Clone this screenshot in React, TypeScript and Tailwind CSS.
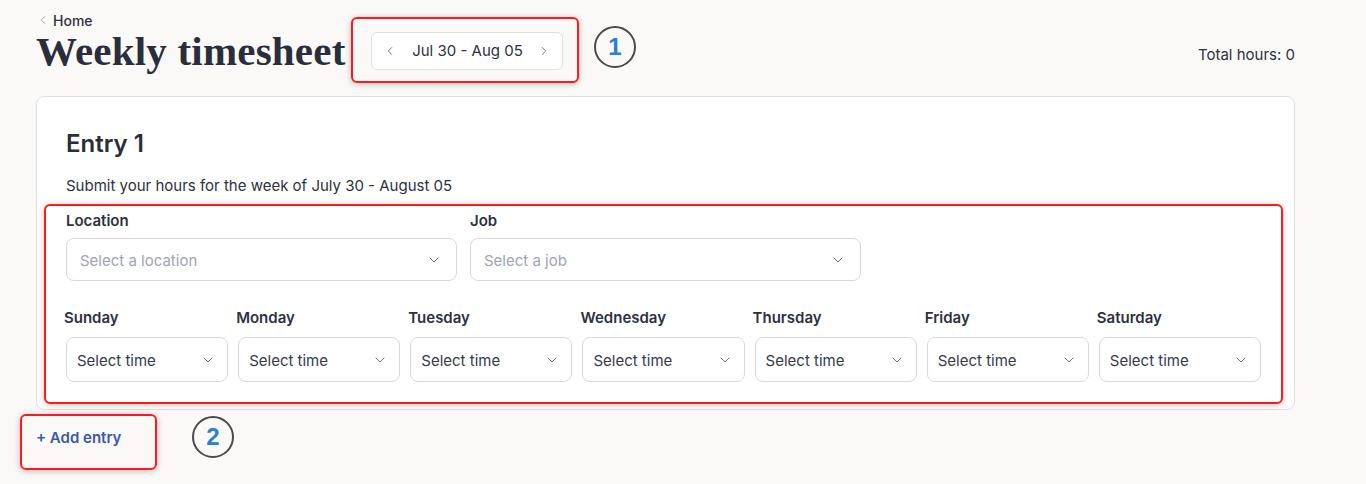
import { ChevronDown, ChevronLeft, ChevronRight } from 'lucide-react'

const days = ['Sunday', 'Monday', 'Tuesday', 'Wednesday', 'Thursday', 'Friday', 'Saturday']

const SelectBox = ({ placeholder, muted, className }: { placeholder: string; muted?: boolean; className?: string }) => (
  <div
    className={`flex items-center justify-between rounded-lg border border-[#dcd8d8] bg-white ${className ?? ''}`}
  >
    <span className={`pt-[3px] text-[15px] ${muted ? 'text-[#a1a4b5]' : 'text-[#353a4c]'}`}>{placeholder}</span>
    <ChevronDown className="h-4 w-4 text-[#6e7284]" strokeWidth={1.5} />
  </div>
)

const Marker = ({ n, className }: { n: number; className: string }) => (
  <div
    className={`absolute flex h-[42px] w-[42px] items-center justify-center rounded-full border-2 border-[#4a4a4a] text-[24px] font-bold text-[#2a80d2] ${className}`}
    style={{ fontFamily: '"Liberation Sans", Arial, sans-serif' }}
  >
    {n}
  </div>
)

export default function App() {
  return (
    <div className="relative min-h-[484px] w-full bg-[#faf9f8] text-[#2d3142]" style={{ fontFamily: 'Inter, "Noto Sans", sans-serif' }}>
      <div className="ml-[36px] w-[1259px]">
        <div className="flex justify-between">
          <div className="pt-[10px]">
            <div className="flex h-[20px] items-center gap-[3px] text-[14px] font-medium text-[#2d3142]">
              <ChevronLeft className="h-[14px] w-[14px] text-[#9a9cab]" strokeWidth={1.5} />
              <span>Home</span>
            </div>
            <div className="mt-[2px] flex h-[38px] items-center">
              <h1
                className="text-[41px] font-bold leading-[38px] tracking-[0.2px] text-[#2a2e3c]"
                style={{ fontFamily: '"Liberation Serif", "Times New Roman", serif' }}
              >
                Weekly timesheet
              </h1>
              <div className="ml-[26px] flex h-[38px] w-[192px] items-center justify-between rounded-md border border-[#e2dfdf] bg-white px-[11px]">
                <ChevronLeft className="h-[14px] w-[14px] text-[#5a6a8a]" strokeWidth={1.5} />
                <span className="text-[15px] text-[#2d3142]">Jul 30 - Aug 05</span>
                <ChevronRight className="h-[14px] w-[14px] text-[#5a6a8a]" strokeWidth={1.5} />
              </div>
            </div>
          </div>
          <div className="pt-[45px] text-[15px] leading-[20px] text-[#2d3142]">Total hours: 0</div>
        </div>

        <div className="mt-[26px] rounded-lg border border-[#e3dfdf] bg-white px-[29px] pb-[27px] pt-[31px]">
          <h2 className="text-[24px] font-semibold leading-[32px] text-[#2a2e3b]">Entry 1</h2>
          <p className="mt-[16px] text-[15px] leading-[20px]">Submit your hours for the week of July 30 - August 05</p>

          <div className="mt-[15px] grid grid-cols-3 gap-x-[13px]">
            <div>
              <div className="text-[15px] font-semibold leading-[20px]">Location</div>
              <SelectBox placeholder="Select a location" muted className="mt-[7px] h-[43px] pl-[13px] pr-[14px]" />
            </div>
            <div>
              <div className="text-[15px] font-semibold leading-[20px]">Job</div>
              <SelectBox placeholder="Select a job" muted className="mt-[7px] h-[43px] pl-[13px] pr-[14px]" />
            </div>
          </div>

          <div className="mr-[4px] mt-[27px] grid grid-cols-7 gap-x-[10px]">
            {days.map((day) => (
              <div key={day}>
                <div className="-ml-[2px] text-[15px] font-semibold leading-[20px]">{day}</div>
                <SelectBox placeholder="Select time" className="mt-[9px] h-[45px] pl-[10px] pr-[11px]" />
              </div>
            ))}
          </div>
        </div>

        <div className="mt-[18px] text-[15px] font-semibold leading-[20px] text-[#3a59a8]">+ Add entry</div>
      </div>

      <div className="pointer-events-none absolute left-[351px] top-[17px] h-[66px] w-[228px] rounded-md border-2 border-[#ff1a1a] shadow-[0_1px_6px_rgba(0,0,0,0.25)]" />
      <div className="pointer-events-none absolute left-[44px] top-[204px] h-[200px] w-[1239px] rounded-md border-2 border-[#ff1a1a] shadow-[0_1px_6px_rgba(0,0,0,0.25)]" />
      <div className="pointer-events-none absolute left-[20px] top-[414px] h-[56px] w-[137px] rounded-md border-2 border-[#ff1a1a] shadow-[0_1px_6px_rgba(0,0,0,0.25)]" />
      <Marker n={1} className="left-[594px] top-[26px]" />
      <Marker n={2} className="left-[192px] top-[416px]" />
    </div>
  )
}
